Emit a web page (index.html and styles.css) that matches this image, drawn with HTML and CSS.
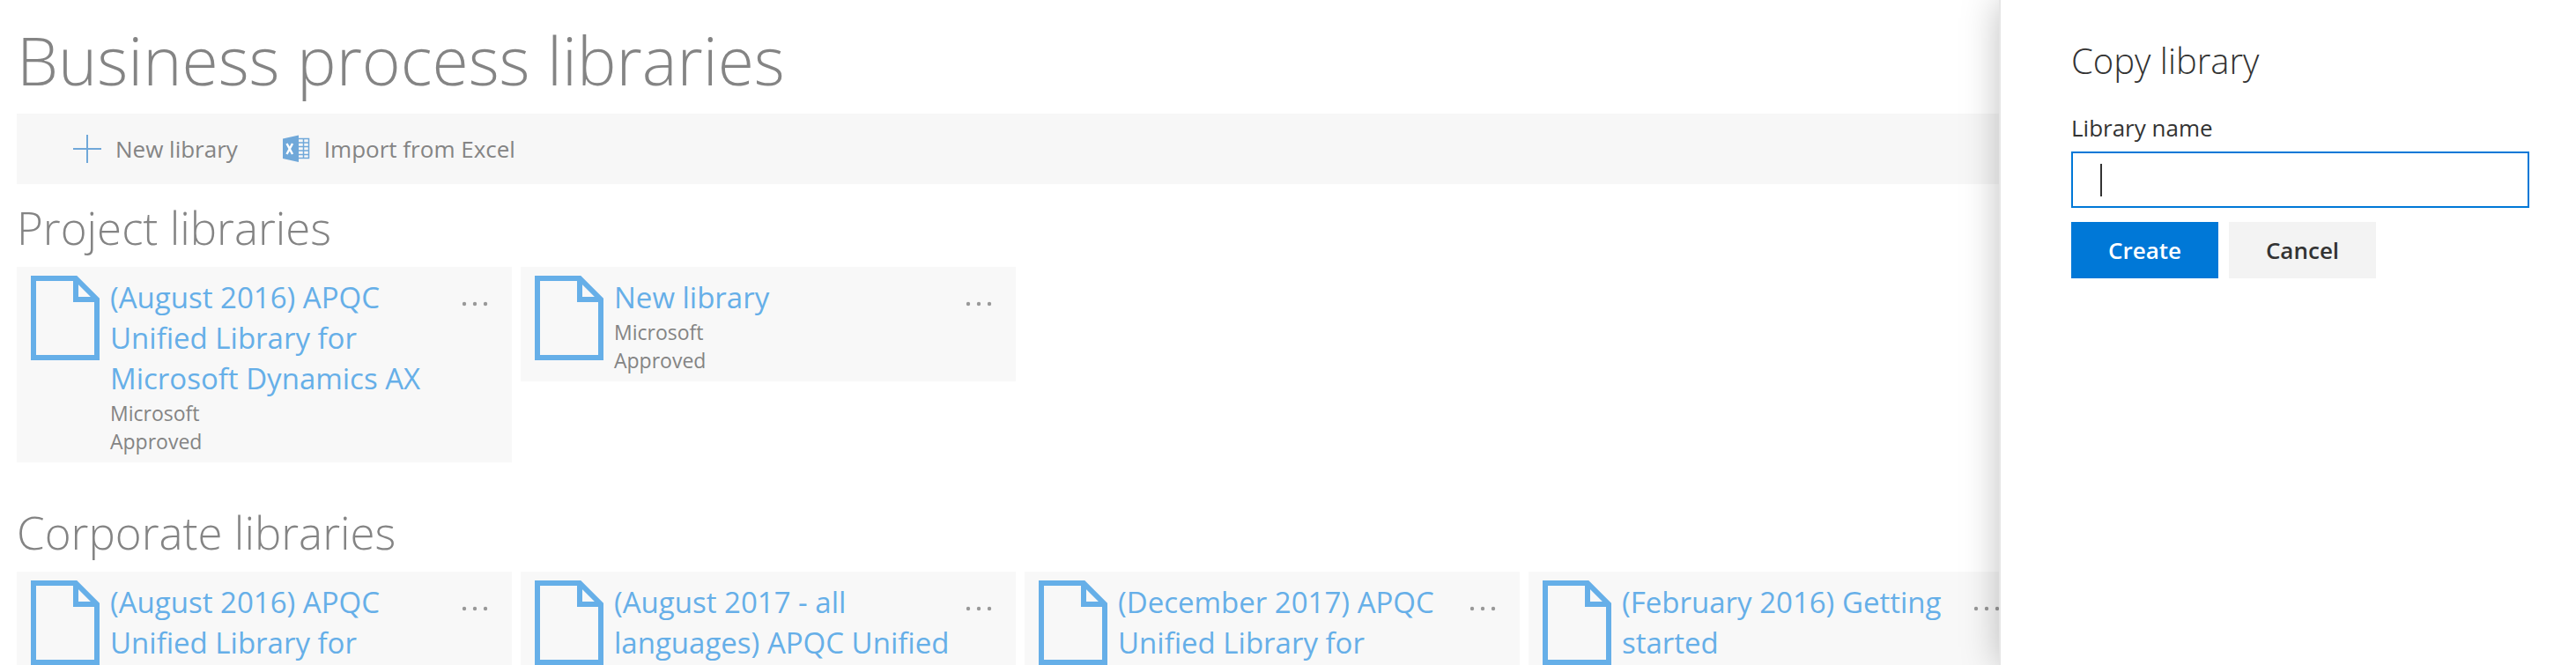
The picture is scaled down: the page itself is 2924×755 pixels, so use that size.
FILE: index.html
```html
<!DOCTYPE html>
<html lang="en">
<head>
<meta charset="utf-8">
<title>Business process libraries</title>
<link rel="stylesheet" href="styles.css">
</head>
<body>
<svg class="symbols" aria-hidden="true">
  <symbol id="doc" viewBox="0 0 78 96">
    <path d="M3 3H51L75 27V93H3Z M51 3V27H75" fill="none" stroke="currentColor" stroke-width="6"/>
  </symbol>
  <symbol id="dots" viewBox="0 0 30 6">
    <circle cx="3" cy="3" r="2.200"/><circle cx="15" cy="3" r="2.200"/><circle cx="27" cy="3" r="2.200"/>
  </symbol>
</svg>
<main class="page">
  <h1 class="page-title">Business process libraries</h1>
  <div class="toolbar">
    <button class="tool" type="button">
      <svg class="tool-icon" viewBox="0 0 32 32" aria-hidden="true"><path d="M16 0V32M0 16H32" fill="none" stroke="currentColor" stroke-width="2"/></svg>
      New library
    </button>
    <button class="tool" type="button">
      <svg class="tool-icon" viewBox="0 0 32 32" aria-hidden="true">
        <path d="M1 4.500L19 .5V31L1 27Z" fill="currentColor"/>
        <path d="M19 4.500H30.500V26.500H19M19 9H30M19 13.500H30M19 18H30M19 22.500H30M24.500 5V26" fill="none" stroke="currentColor" stroke-width="1.500"/>
        <path d="M5.500 10L12 22M12 10L5.500 22" fill="none" stroke="#fff" stroke-width="2.500"/>
      </svg>
      Import from Excel
    </button>
  </div>

  <section class="group">
    <h2 class="group-title">Project libraries</h2>
    <div class="cards">
      <article class="card">
        <svg class="card-icon" aria-hidden="true"><use href="#doc"/></svg>
        <div class="card-body">
          <a class="card-link" href="#">(August 2016) APQC Unified Library for Microsoft Dynamics AX</a>
          <p class="card-meta">Microsoft</p>
          <p class="card-meta">Approved</p>
        </div>
        <button class="more" type="button" aria-label="More options"><svg class="dots"><use href="#dots"/></svg></button>
      </article>
      <article class="card">
        <svg class="card-icon" aria-hidden="true"><use href="#doc"/></svg>
        <div class="card-body">
          <a class="card-link" href="#">New library</a>
          <p class="card-meta">Microsoft</p>
          <p class="card-meta">Approved</p>
        </div>
        <button class="more" type="button" aria-label="More options"><svg class="dots"><use href="#dots"/></svg></button>
      </article>
    </div>
  </section>

  <section class="group">
    <h2 class="group-title">Corporate libraries</h2>
    <div class="cards">
      <article class="card">
        <svg class="card-icon" aria-hidden="true"><use href="#doc"/></svg>
        <div class="card-body"><a class="card-link" href="#">(August 2016) APQC Unified Library for</a></div>
        <button class="more" type="button" aria-label="More options"><svg class="dots"><use href="#dots"/></svg></button>
      </article>
      <article class="card">
        <svg class="card-icon" aria-hidden="true"><use href="#doc"/></svg>
        <div class="card-body"><a class="card-link" href="#">(August 2017 - all languages) APQC Unified</a></div>
        <button class="more" type="button" aria-label="More options"><svg class="dots"><use href="#dots"/></svg></button>
      </article>
      <article class="card">
        <svg class="card-icon" aria-hidden="true"><use href="#doc"/></svg>
        <div class="card-body"><a class="card-link" href="#">(December 2017) APQC Unified Library for</a></div>
        <button class="more" type="button" aria-label="More options"><svg class="dots"><use href="#dots"/></svg></button>
      </article>
      <article class="card">
        <svg class="card-icon" aria-hidden="true"><use href="#doc"/></svg>
        <div class="card-body"><a class="card-link" href="#">(February 2016) Getting started</a></div>
        <button class="more" type="button" aria-label="More options"><svg class="dots"><use href="#dots"/></svg></button>
      </article>
    </div>
  </section>
</main>

<aside class="panel" aria-labelledby="panel-title">
  <form class="form">
    <h2 class="panel-title" id="panel-title">Copy library</h2>
    <label class="label" for="library-name">Library name</label>
    <div class="field">
      <input class="input" id="library-name" type="text">
      <span class="caret"></span>
    </div>
    <div class="actions">
      <button class="button primary" type="button">Create</button>
      <button class="button" type="button">Cancel</button>
    </div>
  </form>
</aside>
</body>
</html>
```
FILE: styles.css
```css
* { box-sizing: border-box; }

body {
  margin: 0;
  height: 100vh;
  overflow: hidden;
  background: #fff;
  color: #333;
  font-family: "Open Sans", "Noto Sans", sans-serif;
  font-size: 26px;
}

h1, h2, p { margin: 0; font-weight: 300; }

button { border: 0; font: inherit; color: inherit; }

.symbols { position: absolute; width: 0; height: 0; }

.page {
  height: 100%;
  padding: 16px 19px 0;
  overflow: hidden;
  color: #848484;
}

.page-title { padding-bottom: 9px; font-size: 75px; line-height: 104px; }

.toolbar {
  display: flex;
  align-items: center;
  gap: 50px;
  height: 80px;
  padding: 0 64px;
  background: #f7f7f7;
}

.tool {
  display: flex;
  align-items: center;
  gap: 16px;
  padding: 0;
  background: none;
}

.tool-icon { width: 32px; height: 32px; color: #70a8d9; }

.group { margin-bottom: 30px; }

.group-title { padding: 11px 0 7px; font-size: 51px; line-height: 76px; }

.cards {
  display: grid;
  grid-template-columns: repeat(auto-fill, 562px);
  align-items: start;
  gap: 10px;
}

.card {
  display: flex;
  align-items: flex-start;
  padding: 10px 16px 8px;
  background: #f8f8f8;
}

.card-icon { flex: none; width: 78px; height: 96px; color: #66afe8; }

.card-body { flex: 1; padding: 2px 0 0 12px; }

.card-link {
  display: block;
  color: #66afe8;
  font-size: 33px;
  line-height: 46px;
  text-decoration: none;
}

.card-meta { font-size: 23px; font-weight: 400; line-height: 32px; }

.more { width: 54px; padding: 29px 11px 0 13px; background: none; color: #999; }

.dots { display: block; width: 30px; height: 6px; fill: currentColor; }

.panel {
  position: absolute;
  top: 0;
  right: 0;
  bottom: 0;
  width: 655px;
  border-left: 2px solid #e6e6e6;
  background: #fff;
  box-shadow: 0 0 40px rgba(0, 0, 0, 0.25);
}

.form { padding: 40px 53px 0 80px; }

.panel-title { font-size: 40px; line-height: 58px; }

.label { display: block; margin-top: 28px; line-height: 38px; }

.field { position: relative; margin-top: 8px; }

.input {
  display: block;
  width: 100%;
  height: 64px;
  padding: 0 32px;
  border: 2px solid #0078d7;
  border-radius: 0;
  outline: 0;
  font: inherit;
  caret-color: transparent;
}

.caret {
  position: absolute;
  top: 14px;
  left: 33px;
  width: 2px;
  height: 37px;
  background: #333;
}

.actions { display: flex; gap: 12px; margin-top: 16px; }

.button {
  width: 167px;
  height: 64px;
  background: #f3f3f3;
  font-weight: 600;
}

.primary { background: #0078d7; color: #fff; }
```
